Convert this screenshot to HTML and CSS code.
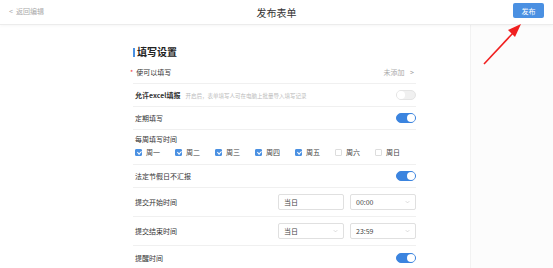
FILE: index.html
```html
<!DOCTYPE html>
<html>
<head>
    <meta charset="utf-8">
    <title>发布表单</title>
    <link rel="stylesheet" href="styles.css">
</head>
<body>
    <div class="header">
        <div class="back">&lt;&nbsp; 返回编辑</div>
        <div class="title">发布表单</div>
        <button class="publish">发布</button>
    </div>

    <div class="wrap">
        <div class="main">
            <div class="panel">
                <h2 class="section-title">填写设置</h2>

                <div class="row">
                    <div class="label"><span class="req">*</span>使可以填写</div>
                    <div class="link">未添加 <span class="arr">&gt;</span></div>
                </div>

                <div class="row">
                    <div class="label"><b>允许excel填报</b><span class="hint">开启后，表单填写人可在电脑上批量导入填写记录</span></div>
                    <div class="switch"></div>
                </div>

                <div class="row">
                    <div class="label">定期填写</div>
                    <div class="switch on"></div>
                </div>

                <div class="row week">
                    <div class="label">每周填写时间</div>
                    <div class="days">
                        <label class="day"><span class="box checked"></span>周一</label>
                        <label class="day"><span class="box checked"></span>周二</label>
                        <label class="day"><span class="box checked"></span>周三</label>
                        <label class="day"><span class="box checked"></span>周四</label>
                        <label class="day"><span class="box checked"></span>周五</label>
                        <label class="day"><span class="box"></span>周六</label>
                        <label class="day"><span class="box"></span>周日</label>
                    </div>
                </div>

                <div class="row">
                    <div class="label">法定节假日不汇报</div>
                    <div class="switch on"></div>
                </div>

                <div class="row tall">
                    <div class="label">提交开始时间</div>
                    <div class="inputs">
                        <div class="field">当日</div>
                        <div class="field select">00:00<svg viewBox="0 0 8 5"><path d="M1 1l3 3 3-3" fill="none" stroke="#bbb" stroke-width="0.8"/></svg></div>
                    </div>
                </div>

                <div class="row tall">
                    <div class="label">提交结束时间</div>
                    <div class="inputs">
                        <div class="field select">当日<svg viewBox="0 0 8 5"><path d="M1 1l3 3 3-3" fill="none" stroke="#bbb" stroke-width="0.8"/></svg></div>
                        <div class="field select">23:59<svg viewBox="0 0 8 5"><path d="M1 1l3 3 3-3" fill="none" stroke="#bbb" stroke-width="0.8"/></svg></div>
                    </div>
                </div>

                <div class="row last">
                    <div class="label">提醒时间</div>
                    <div class="switch on"></div>
                </div>
            </div>
        </div>
        <div class="side"></div>
    </div>

    <!-- red pointer arrow over the page -->
    <svg class="arrow" width="60" height="50" viewBox="0 0 60 50">
        <path d="M3 43 L32 12" stroke="#f02020" stroke-width="1.6" fill="none"/>
        <path d="M40 3 L27 9 L34 16 Z" fill="#f02020"/>
    </svg>
</body>
</html>
```

FILE: styles.css
```css
body {
    margin: 0;
    background-color: #fcfcfc;
    font-family: "Noto Sans CJK SC", "Noto Sans", sans-serif;
    color: #333;
    font-size: 7px;
    height: 268px;
    overflow: hidden;
}
.header {
    position: relative;
    height: 24px;
    background-color: white;
    border-bottom: 1px solid #ececec;
    box-shadow: 0 1px 3px rgba(0, 0, 0, 0.04);
    display: flex;
    align-items: center;
    justify-content: center;
    z-index: 1;
}
.back {
    position: absolute;
    left: 9px;
    top: 6px;
    color: #aaa;
    font-size: 7px;
}
.title {
    font-size: 10px;
    color: #333;
}
.publish {
    position: absolute;
    right: 9px;
    top: 3px;
    width: 31px;
    height: 15px;
    padding: 0;
    border: none;
    border-radius: 2px;
    background-color: #4a90e2;
    color: white;
    font-family: inherit;
    font-size: 7px;
}
.wrap {
    display: flex;
    height: 244px;
}
.main {
    width: 470px;
    background-color: white;
    border-right: 1px solid #f2f2f2;
}
.side {
    flex: 1;
}
.panel {
    width: 283px;
    margin-left: 133px;
}
.section-title {
    margin: 20px 0 2px 0;
    font-size: 10px;
    line-height: 14px;
    font-weight: bold;
    color: #222;
    display: flex;
    align-items: center;
}
.section-title::before {
    content: "";
    width: 2px;
    height: 9px;
    background-color: #4a90e2;
    margin-right: 2px;
}
.row {
    display: flex;
    align-items: center;
    justify-content: space-between;
    height: 22px;
    border-bottom: 1px solid #f0f0f0;
    padding-left: 2px;
}
.row.tall {
    height: 28px;
}
.row.last {
    border-bottom: none;
    height: 24px;
}
.row.week {
    display: block;
    height: 34px;
}
.row.week .label {
    padding-top: 5px;
    line-height: 9px;
}
.req {
    color: #f04040;
    margin-left: -5px;
    margin-right: 3px;
}
.label b {
    font-weight: bold;
}
.hint {
    color: #bbb;
    margin-left: 5px;
    font-size: 5.5px;
}
.link {
    color: #aaa;
    margin-right: 2px;
}
.arr {
    margin-left: 4px;
    color: #999;
}
.switch {
    width: 20px;
    height: 10px;
    border-radius: 5px;
    background-color: #f0f0f0;
    border: 1px solid #e4e4e4;
    box-sizing: border-box;
    position: relative;
}
.switch::after {
    content: "";
    position: absolute;
    top: 0;
    left: 0;
    width: 8px;
    height: 8px;
    border-radius: 50%;
    background-color: white;
}
.switch.on {
    background-color: #3b84df;
    border-color: #3b84df;
}
.switch.on::after {
    left: auto;
    right: 0;
}
.days {
    display: flex;
    margin-top: 3px;
}
.day {
    width: 40px;
    display: flex;
    align-items: center;
    color: #444;
}
.box {
    width: 7px;
    height: 7px;
    border: 1px solid #ddd;
    box-sizing: border-box;
    border-radius: 1px;
    margin-right: 4px;
    background-color: white;
}
.box.checked {
    border-color: #4a90e2;
    background-color: #4a90e2;
    position: relative;
}
.box.checked::after {
    content: "";
    position: absolute;
    left: 1.5px;
    top: 0.5px;
    width: 1.5px;
    height: 3px;
    border-right: 1px solid white;
    border-bottom: 1px solid white;
    transform: rotate(45deg);
}
.inputs {
    display: flex;
    gap: 6px;
}
.field {
    width: 66px;
    height: 16px;
    box-sizing: border-box;
    border: 1px solid #e0e0e0;
    border-radius: 2px;
    padding: 0 5px;
    display: flex;
    align-items: center;
    justify-content: space-between;
    color: #444;
}
.field svg {
    width: 5px;
    height: 4px;
}
.arrow {
    position: absolute;
    left: 481px;
    top: 21px;
    z-index: 2;
}
```
